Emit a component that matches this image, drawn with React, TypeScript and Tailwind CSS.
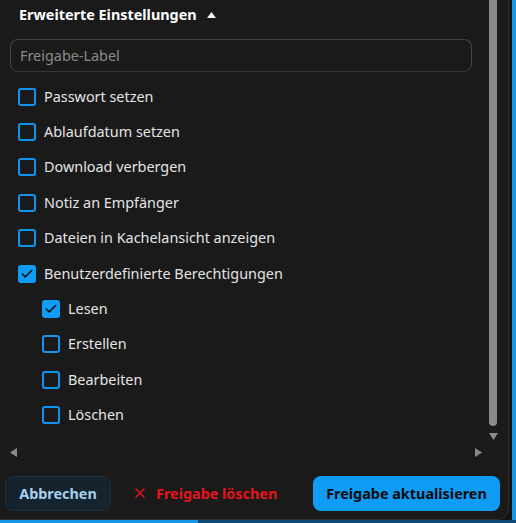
import { Check, X } from 'lucide-react'

const options = [
  { label: 'Passwort setzen', checked: false },
  { label: 'Ablaufdatum setzen', checked: false },
  { label: 'Download verbergen', checked: false },
  { label: 'Notiz an Empfänger', checked: false },
  { label: 'Dateien in Kachelansicht anzeigen', checked: false },
  { label: 'Benutzerdefinierte Berechtigungen', checked: true },
]

const permissions = [
  { label: 'Lesen', checked: true },
  { label: 'Erstellen', checked: false },
  { label: 'Bearbeiten', checked: false },
  { label: 'Löschen', checked: false },
]

function Box({ checked }: { checked: boolean }) {
  return checked ? (
    <span className="w-[18px] h-[18px] rounded-[3px] bg-[#0f9cf5] flex items-center justify-center shrink-0">
      <Check size={14} strokeWidth={2.75} className="text-[#111]" />
    </span>
  ) : (
    <span className="w-[18px] h-[18px] rounded-[3px] border-2 border-[#0f95ee] shrink-0" />
  )
}

function Row({ label, checked, indent }: { label: string; checked: boolean; indent?: boolean }) {
  return (
    <label className={`h-[35.4px] flex items-center gap-[8px] ${indent ? 'pl-[32px]' : 'pl-[8px]'}`}>
      <Box checked={checked} />
      <span className="text-[14.4px] text-[#e4e4e4] leading-5">{label}</span>
    </label>
  )
}

export default function App() {
  return (
    <div className="w-[516px] h-[523px] relative bg-[#141414] overflow-hidden font-['Noto_Sans',sans-serif]">
      <div className="absolute right-0 top-0 w-[4px] h-full bg-[#1597e5]" />
      <div className="absolute left-0 bottom-0 h-[3px] w-full bg-[#0c4a75]" />
      <div className="absolute left-0 bottom-0 h-[3px] w-[198px] bg-[#1597e5]" />

      <div className="relative w-[509px] h-[520px] bg-[#1a1a1a] border-r border-b border-[#2e2e2e] rounded-br-[12px] flex flex-col">
        <div className="relative h-[462px] px-[10px] pr-[38px] pt-[5px] flex flex-col w-[500px]">
          <div className="h-5 pl-[9px] flex items-center gap-[10px]">
            <span className="text-[14.4px] font-bold text-white leading-5">Erweiterte Einstellungen</span>
            <svg width="9" height="6" viewBox="0 0 9 6" className="mt-[-1px]">
              <path d="M0 6 L4.5 0 L9 6 Z" fill="#f0f0f0" />
            </svg>
          </div>
          <div className="mt-[14px] h-[33px] w-[462px] rounded-[8px] border border-[#444] border-b-[#363636] flex items-center px-[9px]">
            <span className="text-[14.4px] text-[#8a8a8a]">Freigabe-Label</span>
          </div>
          <div className="mt-[7px] flex flex-col">
            {options.map((o) => (
              <Row key={o.label} label={o.label} checked={o.checked} />
            ))}
            {permissions.map((p) => (
              <Row key={p.label} label={p.label} checked={p.checked} indent />
            ))}
          </div>

          <div className="absolute left-[489px] top-0 w-[8px] h-[426px] bg-[#8a8a8a] rounded-b-[4px]" />
          <svg width="9" height="7" viewBox="0 0 9 7" className="absolute left-[489px] top-[433px]">
            <path d="M0 0 L9 0 L4.5 7 Z" fill="#8a8a8a" />
          </svg>
          <svg width="7" height="9" viewBox="0 0 7 9" className="absolute left-[10px] top-[448px]">
            <path d="M7 0 L7 9 L0 4.5 Z" fill="#8a8a8a" />
          </svg>
          <svg width="7" height="9" viewBox="0 0 7 9" className="absolute left-[475px] top-[448px]">
            <path d="M0 0 L0 9 L7 4.5 Z" fill="#8a8a8a" />
          </svg>
        </div>

        <div className="flex items-center pl-[5px] pt-[14px]">
          <button className="h-[35px] w-[106px] rounded-[8px] bg-[#14232e] border border-[#1f303c] text-[#a8d0ec] text-[14.4px] font-bold">
            Abbrechen
          </button>
          <button className="ml-[21px] flex items-center gap-[8px] text-[#e5141c] text-[14.4px] font-bold">
            <X size={16} strokeWidth={2} />
            Freigabe löschen
          </button>
          <button className="ml-auto mr-[8px] h-[35px] w-[187px] rounded-[8px] bg-[#0f9cf5] text-[#0a0a0a] text-[14.4px] font-bold">
            Freigabe aktualisieren
          </button>
        </div>
      </div>
    </div>
  )
}
